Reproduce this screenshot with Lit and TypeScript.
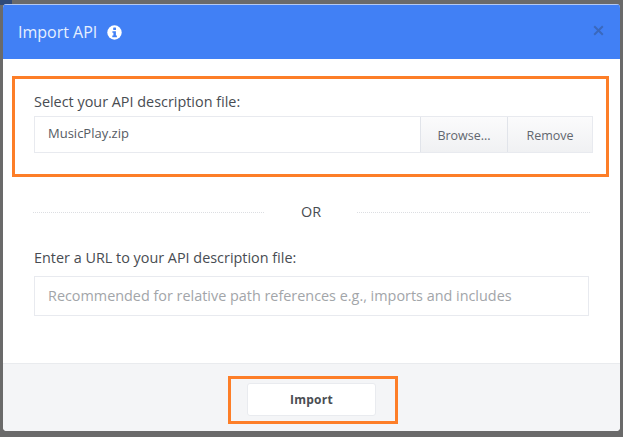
import { LitElement, html, css } from "lit";
import { customElement } from "lit/decorators.js";

@customElement("app-root")
export class AppRoot extends LitElement {
  static styles = css`
    :host {
      display: block;
      position: relative;
      width: 623px;
      height: 437px;
      overflow: hidden;
      box-sizing: border-box;
      padding: 4px 3px 6px 3px;
      background: #6a6a6a;
      font-family: "Open Sans", sans-serif;
      color: #4a4f57;
    }
    .corner {
      position: absolute;
      left: 0;
      top: 0;
      width: 12px;
      height: 5px;
      background: #2f4a78;
    }
    .modal {
      position: relative;
      height: 427px;
      display: flex;
      flex-direction: column;
      background: #fff;
      border-radius: 4px;
      overflow: hidden;
    }
    .header {
      flex: 0 0 55px;
      box-sizing: border-box;
      background: #4180f5;
      border-top: 1px solid #b4c9f2;
      display: flex;
      align-items: center;
      padding: 0 16px 0 15px;
      color: #e6effe;
      font-size: 16px;
      gap: 10px;
    }
    .header svg.info { display: block; margin-top: 1px; }
    .close { margin-left: auto; display: block; margin-top: -4px; }
    .body {
      flex: 1;
      display: flex;
      flex-direction: column;
      padding: 17px 11px 0 9px;
    }
    .box {
      border: 3px solid #fd7e28;
      height: 101px;
      box-sizing: border-box;
      padding: 13px 13px 0 19px;
    }
    .label {
      font-size: 14.4px;
      line-height: 20px;
      color: #484c52;
    }
    .filerow {
      display: flex;
      height: 37px;
      margin-top: 4px;
      box-sizing: border-box;
      border: 1px solid #e8eaef;
    }
    .filename {
      flex: 1;
      padding-left: 13px;
      font-size: 13px;
      line-height: 32px;
      color: #565b63;
    }
    .fbtn {
      flex: none;
      box-sizing: border-box;
      border-left: 1px solid #e1e4ea;
      background: linear-gradient(#fbfbfc, #f0f1f3);
      font-size: 12.5px;
      line-height: 37px;
      color: #62676f;
      text-align: center;
    }
    .browse { width: 87px; }
    .remove { width: 85px; }
    .divider {
      display: flex;
      align-items: center;
      margin: 24px 19px 0 21px;
      height: 22px;
      font-size: 14.4px;
      color: #484c52;
    }
    .divider i {
      display: block;
      height: 0;
      border-top: 1px dotted #dcdee2;
    }
    .divider i.l { width: 231px; }
    .divider i.r { width: 233px; margin-left: auto; }
    .divider span { margin-left: 37px; margin-bottom: 2px; }
    .second { margin: 25px 20px 0 22px; }
    .url {
      margin-top: 8px;
      height: 40px;
      box-sizing: border-box;
      border: 1px solid #e8eaef;
      padding-left: 13px;
      font-size: 14.4px;
      line-height: 38px;
      color: #a2a5a9;
      white-space: nowrap;
    }
    .footer {
      flex: 0 0 68px;
      box-sizing: border-box;
      border-top: 1px solid #e9ebee;
      background: #f4f5f7;
      padding-top: 12px;
      padding-left: 225px;
    }
    .fbox {
      width: 170px;
      height: 48px;
      box-sizing: border-box;
      border: 3px solid #fd7e28;
      padding: 4px 0 0 16px;
    }
    .import {
      width: 129px;
      height: 33px;
      box-sizing: border-box;
      background: #fff;
      border: 1px solid #e9ebef;
      border-radius: 3px;
      font-size: 12px;
      font-weight: 700;
      line-height: 31px;
      letter-spacing: 0.3px;
      text-align: center;
      color: #4a4d52;
    }
  `;

  render() {
    return html`
      <div class="corner"></div>
      <div class="modal">
        <div class="header">
          <span>Import API</span>
          <svg class="info" width="15" height="15" viewBox="0 0 15 15">
            <circle cx="7.5" cy="7.5" r="7.2" fill="#fff"></circle>
            <rect x="6.2" y="2.6" width="2.8" height="2.5" rx="0.5" fill="#4180f5"></rect>
            <path d="M5.4 6.2h3.5v4.4h1v1.6H5.3v-1.6h1.1V7.8h-1z" fill="#4180f5"></path>
          </svg>
          <svg class="close" width="11" height="11" viewBox="0 0 11 11">
            <path d="M1.2 1.2l8.6 8.6M9.8 1.2l-8.6 8.6" stroke="#3a68bd" stroke-width="2" fill="none"></path>
          </svg>
        </div>
        <div class="body">
          <div class="box">
            <div class="label">Select your API description file:</div>
            <div class="filerow">
              <div class="filename">MusicPlay.zip</div>
              <div class="fbtn browse">Browse...</div>
              <div class="fbtn remove">Remove</div>
            </div>
          </div>
          <div class="divider">
            <i class="l"></i><span>OR</span><i class="r"></i>
          </div>
          <div class="second">
            <div class="label">Enter a URL to your API description file:</div>
            <div class="url">Recommended for relative path references e.g., imports and includes</div>
          </div>
        </div>
        <div class="footer">
          <div class="fbox"><div class="import">Import</div></div>
        </div>
      </div>
    `;
  }
}
